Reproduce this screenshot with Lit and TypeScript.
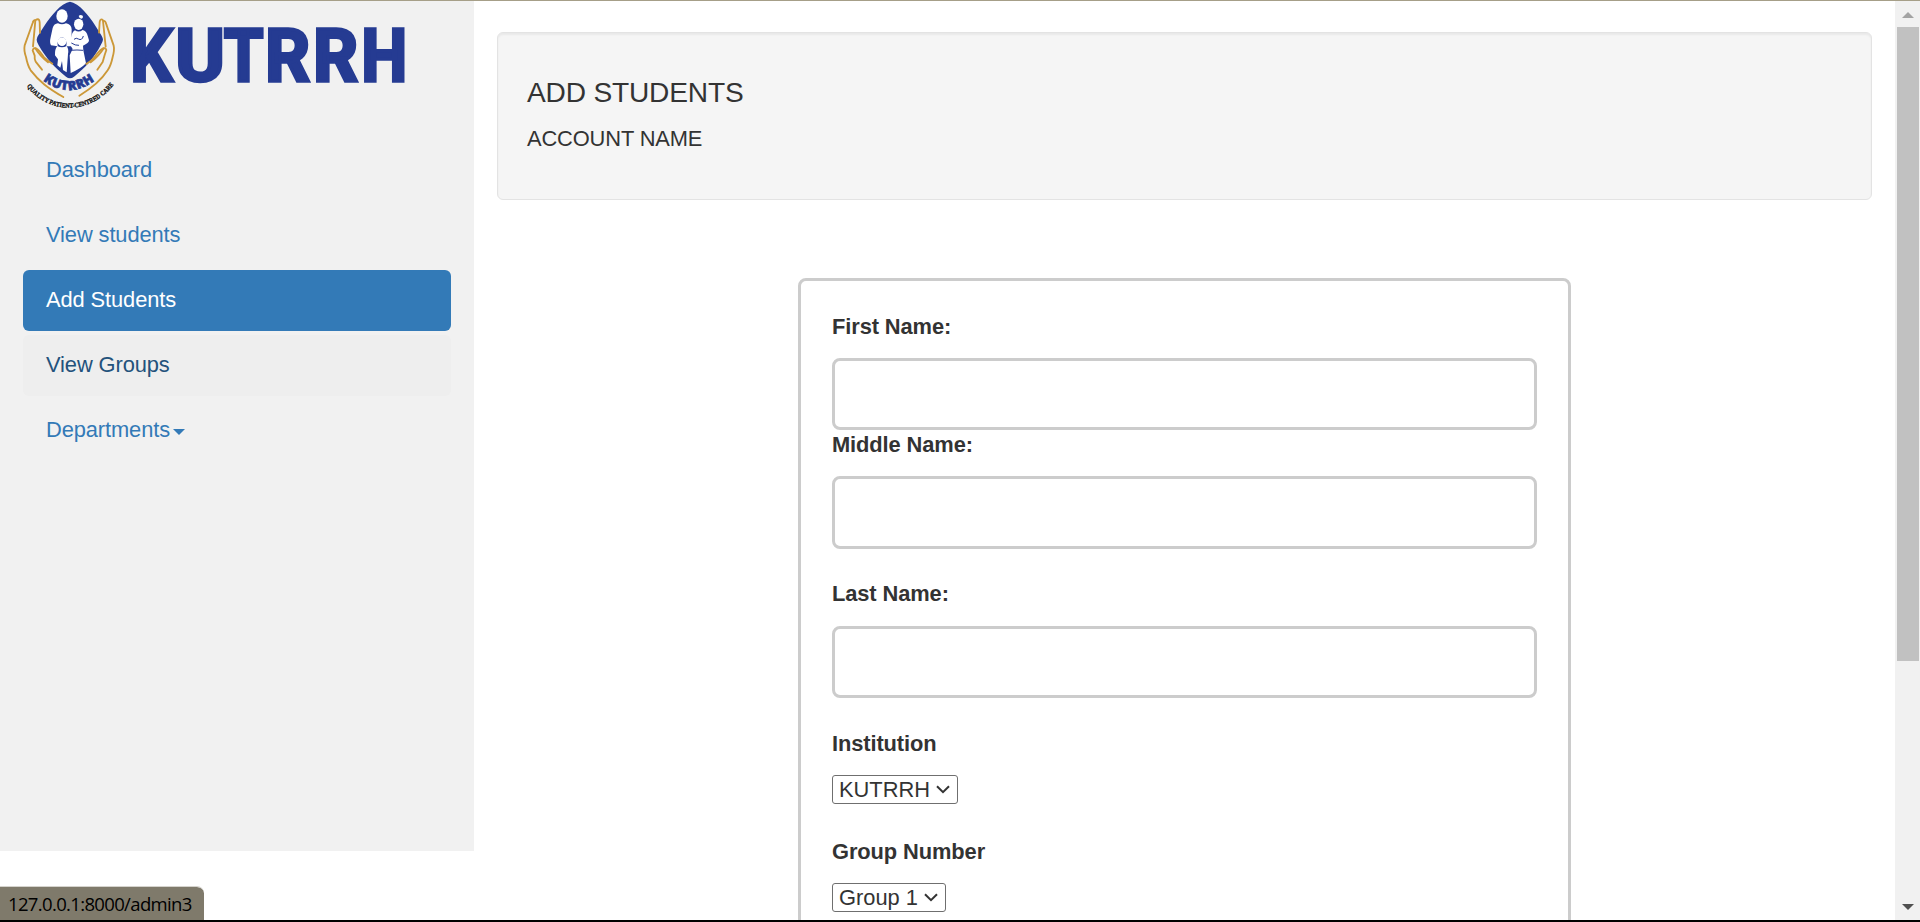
import { LitElement, html, svg, css } from "lit";
import { customElement, property } from "lit/decorators.js";
import { classMap } from "lit/directives/class-map.js";

@customElement("hospital-logo")
class HospitalLogo extends LitElement {
  static styles = css`
    :host { display: block; }
    .logo { display: block; width: 420px; height: 119px; }
    .word { font: 700 72.5px Roboto, "Liberation Sans", sans-serif; fill: #253b92; stroke: #253b92; stroke-width: 3.5; stroke-linejoin: miter; }
    .arc { font: 800 38px "Open Sans", sans-serif; letter-spacing: 2px; fill: #253b92; stroke: #253b92; stroke-width: 2; }
    .motto { font: 700 20px "Liberation Serif", serif; fill: #111; stroke: #111; stroke-width: 1; }
    .gold { fill: none; stroke: #cc9838; stroke-width: 5.5; stroke-linecap: round; stroke-linejoin: round; }
    .blue { fill: #253b92; }
    .white { fill: #fff; }
    .line { fill: none; stroke: #253b92; stroke-width: 3; }
  `;

  private letters = [
    { c: "K", x: 130.4, w: 0.91 },
    { c: "U", x: 175.4, w: 1.03 },
    { c: "T", x: 224, w: 0.875 },
    { c: "R", x: 265.2, w: 0.963 },
    { c: "R", x: 313.2, w: 0.963 },
    { c: "H", x: 361.5, w: 0.89 },
  ];

  render() {
    return html`
      <svg class="logo" viewBox="0 1 420 119">
        <g transform="scale(.33333)">
          <path class="blue" d="M210 5Q219 6 231 14C258 33 282 68 304 106Q309 115 309 119Q308 126 302 136C282 174 256 204 222 230Q210 239 198 230C164 204 138 174 116 136Q110 126 110 119Q110 113 115 106C138 68 162 33 189 14Q201 6 210 5Z" />
          <ellipse class="white" cx="186" cy="48" rx="17" ry="20" />
          <path class="white" d="M174 70Q186 76 198 70Q214 73 215 88L214 139L199 139Q203 117 187 111Q171 113 173 139L153 136Q148 128 152 112L158 84Q162 71 174 70Z" />
          <circle class="white" cx="186" cy="125" r="13" />
          <path class="white" d="M172 138Q186 145 200 138Q207 147 204 162L200 217L189 210L186 183L181 203L172 196L174 178L165 166Q164 147 172 138Z" />
          <ellipse class="white" cx="236" cy="73" rx="14" ry="17" />
          <path class="white" d="M236 48Q241 43 248 47Q251 53 244 56Q238 56 236 48Z" />
          <path class="white" d="M225 91Q236 99 248 90Q260 94 263 107L267 121Q267 130 249 137L250 151L258 190Q243 206 212 219L209 166L218 147L212 137L212 117Q216 94 225 91Z" />
          <path class="line" d="M214 129Q226 137 237 136M222 118Q229 112 235 117Q246 123 250 108M211 151Q232 149 249 151" />
          <path class="gold" d="M120 98L119 67Q118 53 107 60Q100 60 98 69L74 136Q71 151 78 171Q83 197 92 211C118 245 145 265 190 291" />
          <path class="gold" d="M106 62L99 139M126 209L107 185Q103 177 104 167L98 151Q100 142 110 146Q119 152 132 172Q141 181 157 191" />
          <path class="gold" d="M297 98L299 66Q301 53 310 62Q317 63 319 73L341 137Q344 149 338 171Q333 196 323 211C301 245 270 268 238 287" />
          <path class="gold" d="M309 63L317 140M292 209L308 186L314 165L319 150Q317 142 307 146Q297 152 284 171Q275 182 259 192" />
          <path class="gold" d="M106 145Q119 167 144 187M311 145Q298 167 272 187" />
          <defs>
            <path id="name-arc" d="M129 241Q207 302 292 236" />
            <path id="motto-arc" d="M80 259C146 344 270 347 341 254" />
          </defs>
          <text class="arc"><textPath href="#name-arc">KUTRRH</textPath></text>
          <text class="motto"><textPath href="#motto-arc" textLength="304" lengthAdjust="spacingAndGlyphs">QUALITY PATIENT-CENTRED CARE</textPath></text>
        </g>
        ${this.letters.map(
          (l) => svg`<text class="word" transform="translate(${l.x} 80.6) scale(${l.w} 1)">${l.c}</text>`
        )}
      </svg>
    `;
  }
}

@customElement("choice-box")
class ChoiceBox extends LitElement {
  @property() value = "";
  @property({ type: Number }) width = 120;

  static styles = css`
    :host { display: block; }
    .box {
      box-sizing: border-box; height: 29px; padding: 0 7px 0 6px;
      display: flex; align-items: center; justify-content: space-between;
      border: 1px solid #6f6f6f; border-radius: 3px; background: #fff;
      font-size: 21.875px; line-height: 27px; color: #333; white-space: nowrap;
    }
    .chevron { width: 14px; height: 9px; fill: none; stroke: #333; stroke-width: 2; }
  `;

  render() {
    return html`<div class="box" role="combobox" style="width:${this.width}px">
      <span>${this.value}</span>
      <svg class="chevron" viewBox="0 0 14 9"><path d="M1 1.2L7 7.2L13 1.2" /></svg>
    </div>`;
  }
}

@customElement("app-root")
class AppRoot extends LitElement {
  static styles = css`
    :host {
      display: block; font-family: "Liberation Sans", Arial, sans-serif;
      font-size: 21.875px; line-height: 31px; color: #333;
    }
    .window {
      box-sizing: border-box; position: relative; width: 100%; height: 922px; overflow: hidden;
      display: flex; background: #fff; border-top: 1px solid #a69f88; border-bottom: 2px solid #000;
    }
    .side { width: 474px; height: 850px; flex: none; background: #f1f1f1; }
    .nav { display: flex; flex-direction: column; gap: 4px; padding: 20px 23px 0; letter-spacing: -.1px; }
    .item {
      box-sizing: border-box; height: 61px; padding: 14px 23px 16px; border-radius: 6px;
      display: flex; align-items: center; color: #337ab7; text-decoration: none;
    }
    .active { background: #337ab7; color: #fff; }
    .hover { background: #eee; color: #23527c; }
    .caret { width: 12px; height: 6px; margin: 4px 0 0 3px; fill: currentColor; }
    .main { flex: 1; padding: 31px 23px 0; display: flex; flex-direction: column; align-items: stretch; }
    .well {
      box-sizing: border-box; height: 168px; flex: none; padding: 40px 29px;
      background: #f5f5f5; border: 1px solid #e3e3e3; border-radius: 6px;
      box-shadow: inset 0 2px 2px rgba(0, 0, 0, .05);
    }
    .title { margin: 0; font-size: 28.125px; line-height: 40px; font-weight: 400; letter-spacing: -.18px; }
    .sub { margin: 10px 0 0; line-height: 31px; letter-spacing: -.14px; }
    .form {
      box-sizing: border-box; width: 773px; height: 760px; flex: none; margin: 78px 0 0 301px;
      padding: 31px 31px 0; border: 3px solid #ccc; border-radius: 8px;
    }
    .label { display: block; font-weight: 700; line-height: 29px; margin-bottom: 17px; letter-spacing: -.1px; }
    .input {
      display: block; box-sizing: border-box; width: 705px; height: 72px; margin: 0; padding: 0 16px;
      border: 3px solid #ccc; border-radius: 8px; background: #fff; outline: none; font: inherit;
    }
    .middle .input { height: 73px; }
    .last { margin-top: 30px; }
    .last .label { margin-bottom: 18px; }
    .institution { margin-top: 31px; }
    .group { margin-top: 33px; }
    .scroll {
      box-sizing: border-box; width: 25px; flex: none; padding: 11px 1px 10px 2px; background: #f1f1f1;
      display: flex; flex-direction: column; align-items: center;
    }
    .arrow { width: 12px; height: 6px; flex: none; }
    .up { fill: #a3a3a3; }
    .down { fill: #505050; margin-top: auto; }
    .thumb { width: 22px; height: 634px; margin-top: 9px; background: #c1c1c1; }
    .status {
      position: absolute; left: 0; bottom: -2px; box-sizing: border-box; width: 204px; height: 36px;
      padding-left: 8px; border-top: 1px solid #d5d3cd; border-radius: 0 7px 0 0; background: #7f7a6b;
      background-clip: padding-box; color: #000; font: 18.5px/34px "Open Sans", "Noto Sans", sans-serif;
      letter-spacing: -.65px; white-space: nowrap;
    }
  `;

  private items = [
    { label: "Dashboard" },
    { label: "View students" },
    { label: "Add Students", active: true },
    { label: "View Groups", hover: true },
    { label: "Departments", menu: true },
  ] as { label: string; active?: boolean; hover?: boolean; menu?: boolean }[];

  render() {
    return html`
      <div class="window">
        <aside class="side">
          <hospital-logo></hospital-logo>
          <nav class="nav">
            ${this.items.map(
              (i) => html`<a class=${classMap({ item: true, active: !!i.active, hover: !!i.hover })}>
                ${i.label}${i.menu
                  ? html`<svg class="caret" viewBox="0 0 12 6"><path d="M0 0H12L6 6Z" /></svg>`
                  : ""}
              </a>`
            )}
          </nav>
        </aside>
        <main class="main">
          <header class="well">
            <h4 class="title">ADD STUDENTS</h4>
            <p class="sub">ACCOUNT NAME</p>
          </header>
          <form class="form">
            <div class="field"><label class="label">First Name:</label><input class="input" /></div>
            <div class="field middle"><label class="label">Middle Name:</label><input class="input" /></div>
            <div class="field last"><label class="label">Last Name:</label><input class="input" /></div>
            <div class="field institution">
              <label class="label">Institution</label>
              <choice-box value="KUTRRH" width="126"></choice-box>
            </div>
            <div class="field group">
              <label class="label">Group Number</label>
              <choice-box value="Group 1" width="114"></choice-box>
            </div>
          </form>
        </main>
        <div class="scroll">
          <svg class="arrow up" viewBox="0 0 12 6"><path d="M0 6L6 0L12 6Z" /></svg>
          <div class="thumb"></div>
          <svg class="arrow down" viewBox="0 0 12 6"><path d="M0 0H12L6 6Z" /></svg>
        </div>
        <div class="status">127.0.0.1:8000/admin3</div>
      </div>
    `;
  }
}
